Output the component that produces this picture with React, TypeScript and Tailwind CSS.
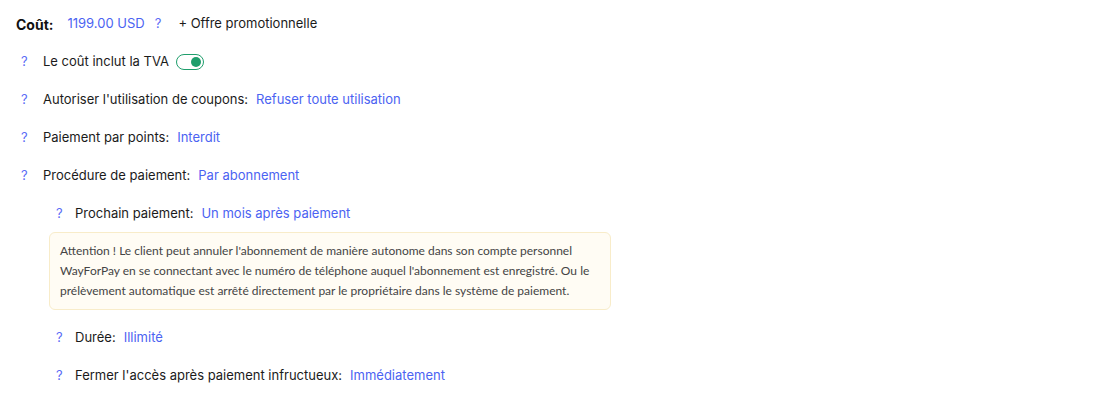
import React from "react";

const Help = ({ indent }: { indent?: boolean }) => (
  <span className={`text-[#5b6cf6] shrink-0 text-left ${indent ? "w-[19px]" : "w-[22px]"}`}>?</span>
);

const Row = ({
  label,
  value,
  indent,
}: {
  label: string;
  value: string;
  indent?: boolean;
}) => (
  <div className={`flex items-center h-[38px] ${indent ? "pl-[56px]" : "pl-[21px]"}`}>
    <Help indent={indent} />
    <span className="text-[#1b1b1b]">{label}</span>
    <span className="ml-[8px] text-[#4b63f2]">{value}</span>
  </div>
);

export default function App() {
  return (
    <div className="w-[1094px] h-[401px] bg-white font-['Inter',sans-serif] text-[13px] pt-[5px]">
      <div className="flex items-center h-[38px] pl-[16px]">
        <span className="font-bold text-[14px] text-[#111]">Coût:</span>
        <span className="ml-[14px] text-[#4b63f2]">1199.00 USD</span>
        <span className="ml-[10px] text-[#5b6cf6]">?</span>
        <span className="ml-[17px] text-[#1b1b1b]">+ Offre promotionnelle</span>
      </div>
      <div className="flex items-center h-[38px] pl-[21px]">
        <Help />
        <span className="text-[#1b1b1b]">Le coût inclut la TVA</span>
        <span className="ml-[7px] w-[28px] h-[16px] rounded-full border-[1.5px] border-[#1f9e6c] bg-white flex items-center justify-end pr-[2px]">
          <span className="w-[10px] h-[10px] rounded-full bg-[#1f9e6c]" />
        </span>
      </div>
      <Row label="Autoriser l'utilisation de coupons:" value="Refuser toute utilisation" />
      <Row label="Paiement par points:" value="Interdit" />
      <Row label="Procédure de paiement:" value="Par abonnement" />
      <Row indent label="Prochain paiement:" value="Un mois après paiement" />
      <div className="ml-[49px] -mt-px w-[562px] rounded-[6px] border border-[#f8ecc9] bg-[#fffcf4] pl-[10px] pr-[11px] py-[8px] font-['Lato',sans-serif] text-[12px] leading-[20px] text-[#444]">
        Attention ! Le client peut annuler l'abonnement de manière autonome dans son compte personnel
        WayForPay en se connectant avec le numéro de téléphone auquel l'abonnement est enregistré. Ou le
        prélèvement automatique est arrêté directement par le propriétaire dans le système de paiement.
      </div>
      <div className="h-[9px]" />
      <Row indent label="Durée:" value="Illimité" />
      <Row indent label="Fermer l'accès après paiement infructueux:" value="Immédiatement" />
    </div>
  );
}
